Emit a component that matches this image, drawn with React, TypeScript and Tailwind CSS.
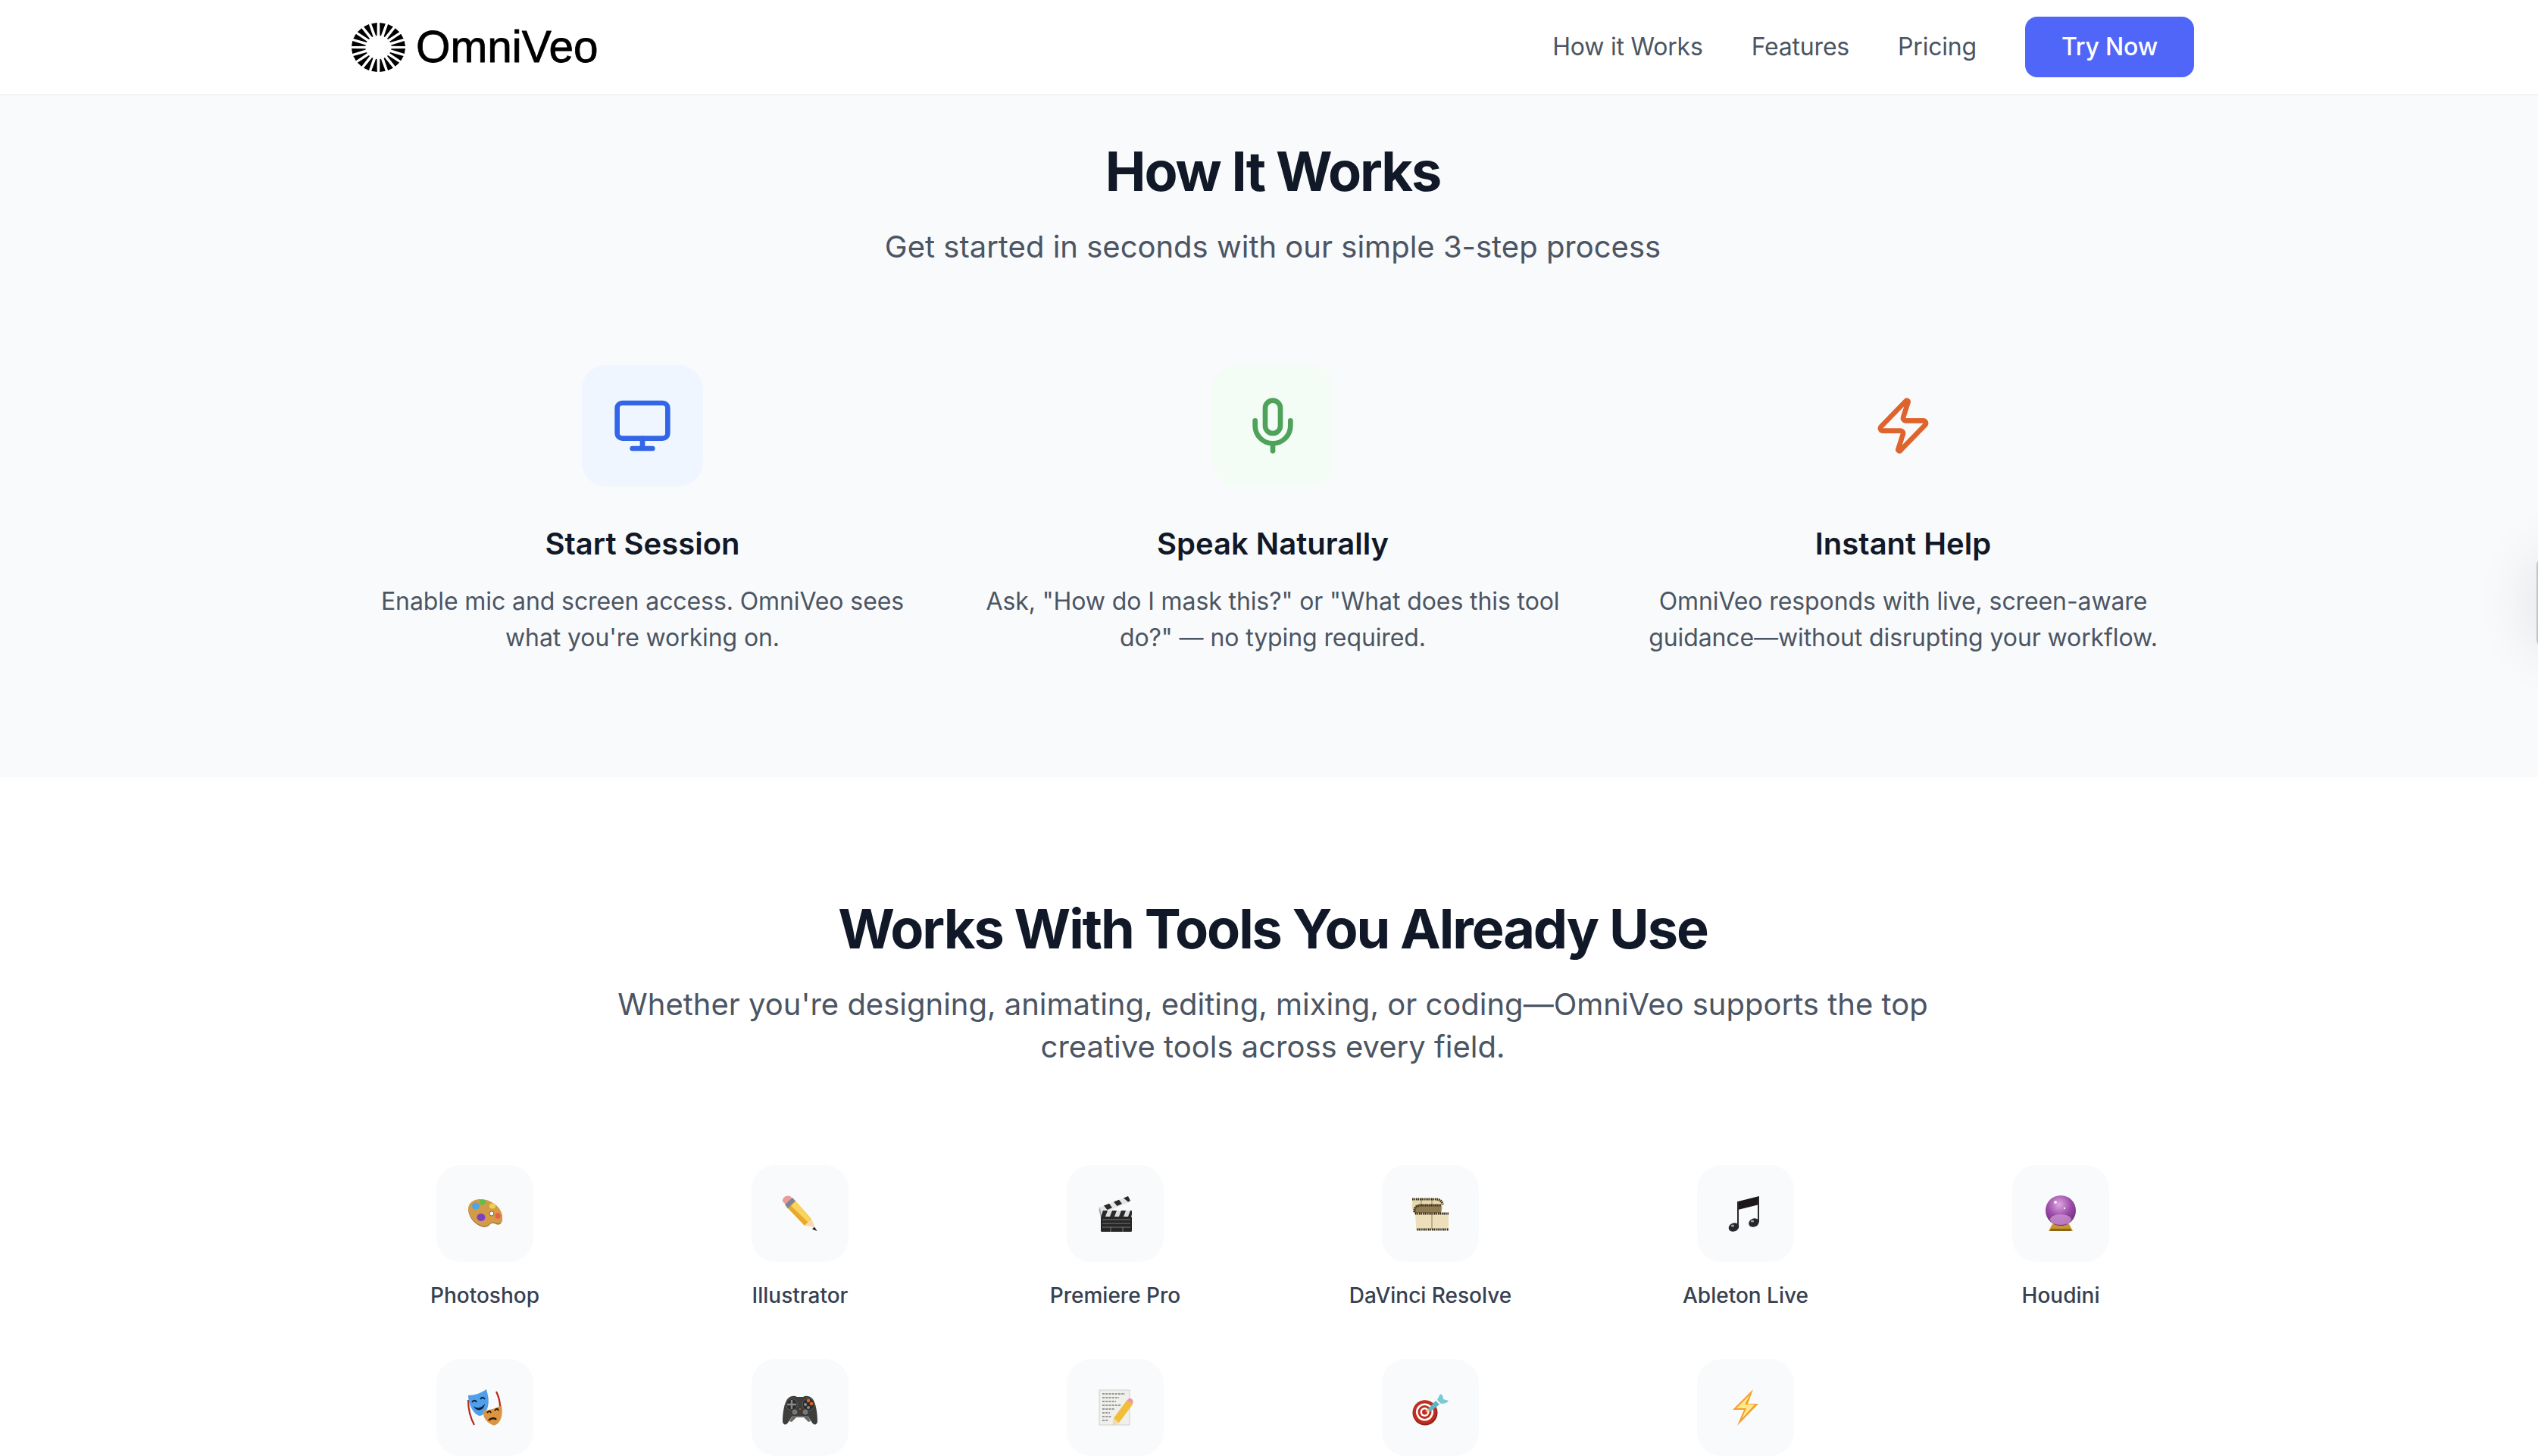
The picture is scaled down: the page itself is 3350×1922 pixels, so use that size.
import { Mic, Monitor, Zap } from "lucide-react";
import type { ReactNode } from "react";

const spokes = Array.from({ length: 20 }, (_, i) => {
  const a = ((i * 18 + 9) * Math.PI) / 180;
  const pt = (r: number, d: number) => {
    const t = a + (d * Math.PI) / 180;
    return `${(50 + r * Math.cos(t)).toFixed(2)},${(50 + r * Math.sin(t)).toFixed(2)}`;
  };
  return [pt(50, -6.2), pt(50, 6.2), pt(24, 2.5), pt(24, -2.5)].join(" ");
});

function Logo() {
  return (
    <svg viewBox="0 0 100 100" preserveAspectRatio="none" className="w-[71px] h-[65px] shrink-0">
      {spokes.map((p) => (
        <polygon key={p} points={p} fill="#000" />
      ))}
    </svg>
  );
}

const Svg = ({ children }: { children: ReactNode }) => (
  <svg viewBox="0 0 48 48" className="w-[48px] h-[48px]">
    {children}
  </svg>
);

const Palette = () => (
  <Svg>
    <path d="M3 14C7 6 18 4 29 8c10 4 18 12 18 22 0 7-4 10-8 8-3-2-6-2-8 0-3 4-8 5-14 2C7 35 0 24 3 14z" fill="#8a5a22" />
    <path d="M3 13C7 5 18 3 29 7c10 4 18 12 18 22 0 7-4 10-8 8-3-2-6-2-8 0-3 4-8 5-14 2C7 34 0 23 3 13z" fill="#d39a48" />
    <ellipse cx="12" cy="14" rx="5" ry="4.5" fill="#4aa6e8" />
    <ellipse cx="21" cy="9" rx="4" ry="3.6" fill="#5cc04c" />
    <ellipse cx="34" cy="14" rx="4" ry="3.6" fill="#f0d050" />
    <ellipse cx="41" cy="27" rx="3.5" ry="3.8" fill="#ee5a50" />
    <ellipse cx="19" cy="29" rx="5.5" ry="5" fill="#7b3fc4" />
    <ellipse cx="33" cy="24" rx="2.8" ry="3" fill="#fff" stroke="#5b3a14" strokeWidth="0.7" />
  </Svg>
);

const Pencil = () => (
  <Svg>
    <path d="M1 8C0 3 6-1 11 1l3 3-9 8z" fill="#ec9a9a" />
    <path d="M4 12 14 3l4.500 5L8 17.500z" fill="#7d8596" />
    <path d="M8 17 18 7.500 39 31l-9 9z" fill="#e8a92c" />
    <path d="M12 13.500 18 7.500 39 31l-4.500 4.500z" fill="#fad35c" />
    <path d="M30 40l9-9 4.500 10.500z" fill="#f5d9a8" />
    <path d="M40 44.500 43 41.500l3.500 5.500z" fill="#222" />
  </Svg>
);

const Clapper = () => (
  <Svg>
    <path d="M3 16 41 1l3.500 7L6.500 24z" fill="#e5e5e5" />
    <path d="M9 13.500l7-2.700 4 5.400-6.500 2.800zM22 8.500l7-2.800 4 5.400-6.500 2.800zM35 3.500l6-2.400 3 6-3 1.300z" fill="#2a2a2a" />
    <path d="M3 15 7.500 27 5 29 2.500 20z" fill="#aaa" />
    <rect x="5" y="20" width="41" height="8" fill="#ddd" />
    <path d="M8 20h6l-3 8H5zM20 20h6l-3 8h-6zM32 20h6l-3 8h-6zM44 20h2v5l-1 3h-4z" fill="#2a2a2a" />
    <rect x="5" y="28" width="41" height="20" rx="1.500" fill="#262626" />
    <path d="M7 32h37M7 37h37M7 42h37M18 42v6M34 42v6" stroke="#8f8f8f" strokeWidth="0.8" />
  </Svg>
);

const Film = () => (
  <Svg>
    <path d="M0 4h32c6 0 8 3 8 8v6H0z" fill="#e6d8b0" />
    <path d="M3 24c-2-6 1-12 9-12h26c1 4 1 8 0 12z" fill="#8f7a52" />
    <path d="M4 23h44v22H8c-2 0-3-1-3-3z" fill="#ecdfba" />
    <path d="M12 4v8M26 4v8M26 24v21" stroke="#7a6842" strokeWidth="0.8" />
    <path d="M0 5h31c5 0 9 3 9 7" fill="none" stroke="#3a2e1a" strokeWidth="3.200" strokeDasharray="1.600 0.900" />
    <path d="M3 22c-1-6 3-9 9-9h26" fill="none" stroke="#3a2e1a" strokeWidth="3.200" strokeDasharray="1.600 0.900" />
    <path d="M4 24h44M6 45h42" stroke="#2e2414" strokeWidth="3.200" strokeDasharray="1.600 0.900" />
  </Svg>
);

const Music = () => (
  <Svg>
    <path d="M14 8 42 1v11L14 19z" fill="#1d1719" />
    <path d="M14 8v33M41 2v33" stroke="#2a2a2e" strokeWidth="2" fill="none" />
    <ellipse cx="8.500" cy="42" rx="7" ry="5.500" transform="rotate(-25 8.500 42)" fill="#26262c" />
    <ellipse cx="35" cy="36" rx="7" ry="5.500" transform="rotate(-25 35 36)" fill="#26262c" />
    <ellipse cx="7" cy="40" rx="2.200" ry="1.500" fill="#9aa0a8" />
    <ellipse cx="33" cy="34" rx="2.200" ry="1.500" fill="#9aa0a8" />
  </Svg>
);

const Ball = () => (
  <Svg>
    <defs>
      <radialGradient id="ball" cx="0.45" cy="0.3" r="0.8">
        <stop offset="0" stopColor="#e0a8e0" />
        <stop offset="0.5" stopColor="#9a4aa8" />
        <stop offset="1" stopColor="#5e2468" />
      </radialGradient>
    </defs>
    <path d="M13 38h22l5 9H8z" fill="#c8952e" />
    <path d="M10 47h28l-1-3H11z" fill="#8d6518" />
    <circle cx="24" cy="20" r="20" fill="url(#ball)" />
    <ellipse cx="24" cy="32" rx="14" ry="7" fill="#d49ad8" opacity="0.7" />
    <circle cx="17" cy="9" r="2" fill="#fff" opacity="0.85" />
    <circle cx="29" cy="17" r="1.200" fill="#fff" opacity="0.85" />
  </Svg>
);

const Masks = () => (
  <Svg>
    <path d="M2 14c0 10 2 22 8 33M39 3c3 6 5 13 5 20" fill="none" stroke="#b52a1c" strokeWidth="2.200" />
    <path d="M2 8C10 8 19 5 26 0c3 10 4 18 1 26-3 6-7 9-10 9C9 33 2 20 2 8z" fill="#4f9fea" />
    <path d="M7 17c2-3 5-3 6 0M18 13c2-3 4-3 6 0" fill="none" stroke="#10203a" strokeWidth="2" />
    <path d="M9 22c4 4 11 3 15-3-1 9-11 12-15 3z" fill="#10203a" />
    <path d="M22 28c7 0 17-3 24-7 2 10 0 20-5 24-3 3-6 3-9 1-7-4-11-10-10-18z" fill="#dd9440" />
    <path d="M27 31c2-3 4-3 5 0M37 28c2-3 4-3 5 0" fill="none" stroke="#2a1808" strokeWidth="2" />
    <path d="M29 41c3-3 8-4 10-1" fill="none" stroke="#2a1808" strokeWidth="2.400" />
  </Svg>
);

const Gamepad = () => (
  <Svg>
    <g transform="translate(0 3)">
      <path d="M8 9c4-4 9-4 12-2h8c3-2 8-2 12 2 5 5 7 20 7 30 0 5-5 6-7 2l-6-9H14l-6 9c-2 4-7 3-7-2C1 29 3 14 8 9z" fill="#3e3e3c" />
      <path d="M14 32h20l4 7-3 1-6-6H19l-6 6-3-1z" fill="#6a6a68" />
      <circle cx="13" cy="17" r="7.500" fill="#2c2c2c" stroke="#666" strokeWidth="0.8" />
      <path d="M13 11v12M7 17h12" stroke="#888" strokeWidth="2.400" />
      <circle cx="35" cy="17" r="8" fill="#2c2c2c" stroke="#666" strokeWidth="0.8" />
      <circle cx="39" cy="16" r="2.300" fill="#e0651f" />
      <circle cx="35" cy="12" r="2.300" fill="#e0651f" />
      <circle cx="31" cy="17" r="2.100" fill="#8a8a8a" />
      <circle cx="35" cy="21" r="2.100" fill="#8a8a8a" />
      <circle cx="17" cy="27" r="4.200" fill="#777" stroke="#2a2a2a" />
      <circle cx="31" cy="27" r="4.200" fill="#777" stroke="#2a2a2a" />
      <circle cx="24" cy="23" r="1" fill="#d06020" />
    </g>
  </Svg>
);

const Memo = () => (
  <Svg>
    <rect x="3" y="1" width="40" height="46" fill="#efefec" stroke="#cfcfcb" />
    <path d="M7 6h30M7 11h22M7 16h18M7 21h24M7 26h16M7 31h10M7 36h12M7 41h8" stroke="#444" strokeWidth="1.100" strokeDasharray="3 1.200" />
    <path d="M39 15 47 20 29 44l-8 3 1-9z" fill="#f2bd38" />
    <path d="M39 15l3-3c2-1 5 1 5.500 3L47 20z" fill="#ec9a9a" />
    <path d="M21 47l1-9 7 6z" fill="#f5d9a8" />
  </Svg>
);

const Dart = () => (
  <Svg>
    <circle cx="17" cy="31" r="16.500" fill="#8f1f16" />
    <circle cx="16.500" cy="30" r="15.500" fill="#c12d20" />
    <circle cx="16.500" cy="30" r="11.500" fill="#fff" />
    <circle cx="16.500" cy="30" r="9" fill="#c12d20" />
    <circle cx="16.500" cy="30" r="6" fill="#fff" />
    <circle cx="16.500" cy="30" r="3.500" fill="#c12d20" />
    <path d="M20 27 31 15l5 5-13 10z" fill="#5fb4c4" />
    <path d="M33 14 37 6c3 1 4 4 4 7l7 2c-2 3-6 4-10 4z" fill="#7cc8d6" />
    <path d="M17 30l4-4 2 3z" fill="#e8d070" />
  </Svg>
);

const Bolt = () => (
  <Svg>
    <path d="M34 0 7 27h15L13 48l28-29H27z" fill="#f59f2c" />
    <path d="M30 7 12 25h13l-6 14 17-19H23z" fill="#fde88a" />
  </Svg>
);

const steps = [
  {
    icon: <Monitor className="w-[80px] h-[80px] text-[#3366e6]" strokeWidth={2} />,
    box: "bg-[#eff6ff]",
    title: "Start Session",
    lines: ["Enable mic and screen access. OmniVeo sees", "what you're working on."],
  },
  {
    icon: <Mic className="w-[80px] h-[80px] text-[#4ea25a]" strokeWidth={2} />,
    box: "bg-[#f3fdf5]",
    title: "Speak Naturally",
    lines: ['Ask, "How do I mask this?" or "What does this tool', 'do?" — no typing required.'],
  },
  {
    icon: <Zap className="w-[80px] h-[80px] text-[#df632c]" strokeWidth={2} />,
    box: "bg-transparent",
    title: "Instant Help",
    lines: ["OmniVeo responds with live, screen-aware", "guidance—without disrupting your workflow."],
  },
];

const tools: { name?: string; icon: ReactNode }[] = [
  { name: "Photoshop", icon: <Palette /> },
  { name: "Illustrator", icon: <Pencil /> },
  { name: "Premiere Pro", icon: <Clapper /> },
  { name: "DaVinci Resolve", icon: <Film /> },
  { name: "Ableton Live", icon: <Music /> },
  { name: "Houdini", icon: <Ball /> },
  { icon: <Masks /> },
  { icon: <Gamepad /> },
  { icon: <Memo /> },
  { icon: <Dart /> },
  { icon: <Bolt /> },
];

export default function App() {
  return (
    <div className="w-full h-screen overflow-hidden bg-white">
      <div className="w-[3360px] font-['Inter',sans-serif] antialiased">
        <header className="h-[126px] bg-white border-b-2 border-[#f3f4f6]">
          <div className="w-[2560px] h-full mx-auto px-[64px] flex items-center justify-between">
            <div className="flex items-center gap-[14px]">
              <Logo />
              <span className="font-['Liberation_Sans',sans-serif] text-[58.500px] leading-none text-black [-webkit-text-stroke:0.8px_black]">
                OmniVeo
              </span>
            </div>
            <nav className="flex items-center gap-[64px] text-[32px] leading-[48px] font-normal tracking-[-0.200px] text-[#4b5563]">
              <span>How it Works</span>
              <span>Features</span>
              <span>Pricing</span>
              <span className="h-[80px] px-[48px] flex items-center rounded-[16px] bg-[#4f66f8] text-white font-medium">
                Try Now
              </span>
            </nav>
          </div>
        </header>

        <section className="bg-[#f9fafb] pt-[60px] pb-[160px]">
          <div className="w-[2560px] mx-auto px-[64px]">
            <div className="text-center mb-[128px]">
              <h2 className="text-[72px] leading-[80px] font-bold tracking-[-2.100px] text-[#111827] mb-[32px]">How It Works</h2>
              <p className="text-[40px] leading-[56px] text-[#4b5563]">Get started in seconds with our simple 3-step process</p>
            </div>
            <div className="grid grid-cols-3 gap-[64px]">
              {steps.map((s) => (
                <div key={s.title} className="flex flex-col items-center text-center">
                  <div className={`w-[160px] h-[160px] rounded-[32px] flex items-center justify-center mb-[48px] ${s.box}`}>{s.icon}</div>
                  <h3 className="text-[40px] leading-[56px] font-semibold text-[#111827] mb-[24px]">{s.title}</h3>
                  <p className="text-[32px] leading-[48px] tracking-[-0.100px] text-[#4b5563]">
                    {s.lines[0]}
                    <br />
                    {s.lines[1]}
                  </p>
                </div>
              ))}
            </div>
          </div>
        </section>

        <section className="bg-white pt-[160px]">
          <div className="w-[2560px] mx-auto px-[64px]">
            <div className="text-center mb-[128px]">
              <h2 className="text-[72px] leading-[80px] font-bold tracking-[-2.100px] text-[#111827] mb-[32px]">Works With Tools You Already Use</h2>
              <p className="w-[1792px] mx-auto text-[40px] leading-[56px] text-[#4b5563]">
                Whether you're designing, animating, editing, mixing, or coding—OmniVeo supports the top creative tools across every field.
              </p>
            </div>
            <div className="grid grid-cols-6 gap-x-[64px] gap-y-[64px]">
              {tools.map((t, i) => (
                <div key={i} className="flex flex-col items-center">
                  <div className="w-[128px] h-[128px] rounded-[32px] bg-[#f9fafb] flex items-center justify-center">{t.icon}</div>
                  {t.name && <span className="mt-[24px] text-[28px] leading-[40px] font-medium text-[#374151]">{t.name}</span>}
                </div>
              ))}
            </div>
          </div>
        </section>
      </div>
      <div className="fixed left-[3348px] top-[738px] w-[60px] h-[115px] rounded-l-[8px] bg-white border-l-2 border-[#c4c4c4] shadow-[0_0_80px_rgba(0,0,0,0.12)]" />
    </div>
  );
}
